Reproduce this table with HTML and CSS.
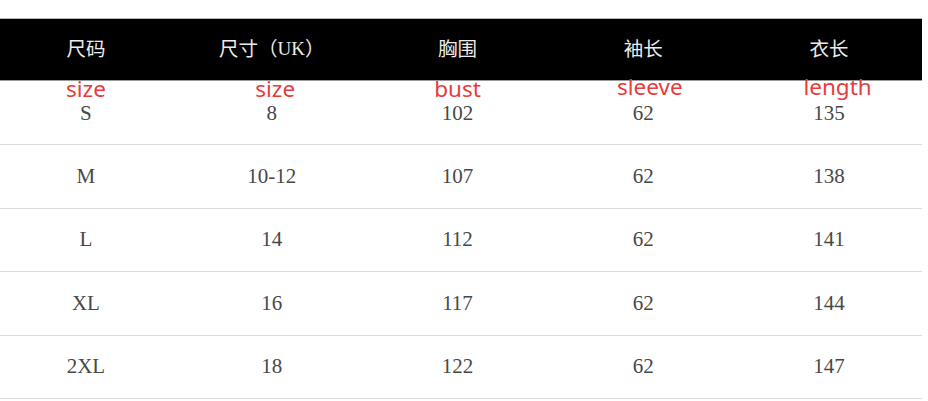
FILE: index.html
```html
<!DOCTYPE html>
<html lang="zh">
<head>
<meta charset="utf-8">
<title>Size chart</title>
<link rel="stylesheet" href="styles.css">
</head>
<body>
<div class="chart">
  <div class="row head">
    <div class="cell">尺码</div>
    <div class="cell">尺寸（<span class="latin">UK</span>）</div>
    <div class="cell">胸围</div>
    <div class="cell">袖长</div>
    <div class="cell">衣长</div>
  </div>
  <div class="row first">
    <div class="cell"><span class="tag tag-low">size</span><span class="val">S</span></div>
    <div class="cell"><span class="tag tag-low shift-1">size</span><span class="val">8</span></div>
    <div class="cell"><span class="tag tag-low">bust</span><span class="val">102</span></div>
    <div class="cell"><span class="tag tag-high shift-2">sleeve</span><span class="val">62</span></div>
    <div class="cell"><span class="tag tag-high shift-3">length</span><span class="val">135</span></div>
  </div>
  <div class="row">
    <div class="cell">M</div>
    <div class="cell">10-12</div>
    <div class="cell">107</div>
    <div class="cell">62</div>
    <div class="cell">138</div>
  </div>
  <div class="row">
    <div class="cell">L</div>
    <div class="cell">14</div>
    <div class="cell">112</div>
    <div class="cell">62</div>
    <div class="cell">141</div>
  </div>
  <div class="row">
    <div class="cell">XL</div>
    <div class="cell">16</div>
    <div class="cell">117</div>
    <div class="cell">62</div>
    <div class="cell">144</div>
  </div>
  <div class="row">
    <div class="cell">2XL</div>
    <div class="cell">18</div>
    <div class="cell">122</div>
    <div class="cell">62</div>
    <div class="cell">147</div>
  </div>
</div>
</body>
</html>
```
FILE: styles.css
```css
html, body {
  margin: 0;
  padding: 0;
  background: #ffffff;
}

.chart {
  width: 929px;
  margin: 18px 0 0 -7px;
  font-family: "Liberation Serif", "Noto Sans CJK SC", serif;
  font-size: 21px;
  line-height: 1;
  color: #484848;
}

.row {
  display: grid;
  grid-template-columns: repeat(5, 1fr);
  box-sizing: border-box;
  height: 63.5px;
  border-bottom: 1px solid #dcdcdc;
}

.row.head {
  height: 63px;
  background: #000000;
  border-top: 1px solid #b8b8b8;
  border-bottom: 1px solid #9a9a9a;
  color: #ececec;
  font-family: "Noto Sans CJK SC", sans-serif;
  font-size: 19.5px;
  line-height: 1.3;
  padding-bottom: 4px;
}

.row.first {
  height: 64px;
}

.cell {
  position: relative;
  display: flex;
  align-items: center;
  justify-content: center;
}

.val {
  line-height: 16px;
  padding-top: 1px;
}

.latin {
  font-family: "Liberation Serif", serif;
  font-size: 19px;
  position: relative;
  top: 2px;
}

.tag {
  position: absolute;
  left: 0;
  right: 0;
  text-align: center;
  font-family: "Noto Sans", "Open Sans", sans-serif;
  font-size: 22.5px;
  line-height: 14px;
  color: #e63c3c;
}

.tag-low {
  top: 0.5px;
}

.tag-high {
  top: -1.5px;
}

.shift-1 {
  left: 7px;
}

.shift-2 {
  left: 13px;
}

.shift-3 {
  left: 17px;
}
```
